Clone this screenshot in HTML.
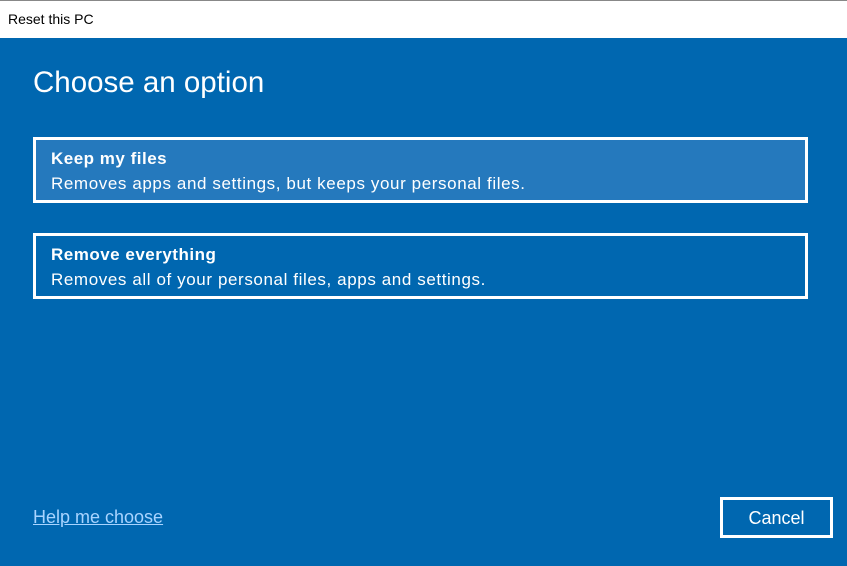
<!DOCTYPE html>
<html><head><style>
*{margin:0;padding:0;box-sizing:border-box}
body{width:847px;height:566px;overflow:hidden;background:#0067b0;font-family:"Liberation Sans",sans-serif;position:relative;color:#fff}
.tb{position:absolute;left:0;top:0;width:847px;height:38px;background:#fff;border-top:1px solid #888;color:#000;font-size:14px;padding:10px 0 0 8px}
h1{position:absolute;left:33px;top:66px;font-size:29.5px;font-weight:300}
.box{position:absolute;left:33px;width:775px;height:66px;border:3px solid #fff;padding:9px 0 0 15px}
.box b{display:block;font-size:17px;font-weight:bold;letter-spacing:0.5px}
.box span{display:block;font-size:17px;margin-top:5px;letter-spacing:0.6px}
.help{position:absolute;left:33px;top:507px;font-size:18px;color:#a8d4ff;text-decoration:underline}
.cancel{position:absolute;left:720px;top:497px;width:113px;height:41px;border:3px solid #fff;font-size:18px;text-align:center;padding-top:8px}
</style></head><body>
<div class="tb">Reset this PC</div>
<h1>Choose an option</h1>
<div class="box" style="top:137px;background:#2579bd"><b>Keep my files</b><span>Removes apps and settings, but keeps your personal files.</span></div>
<div class="box" style="top:233px"><b>Remove everything</b><span>Removes all of your personal files, apps and settings.</span></div>
<div class="help">Help me choose</div>
<div class="cancel">Cancel</div>
</body></html>
